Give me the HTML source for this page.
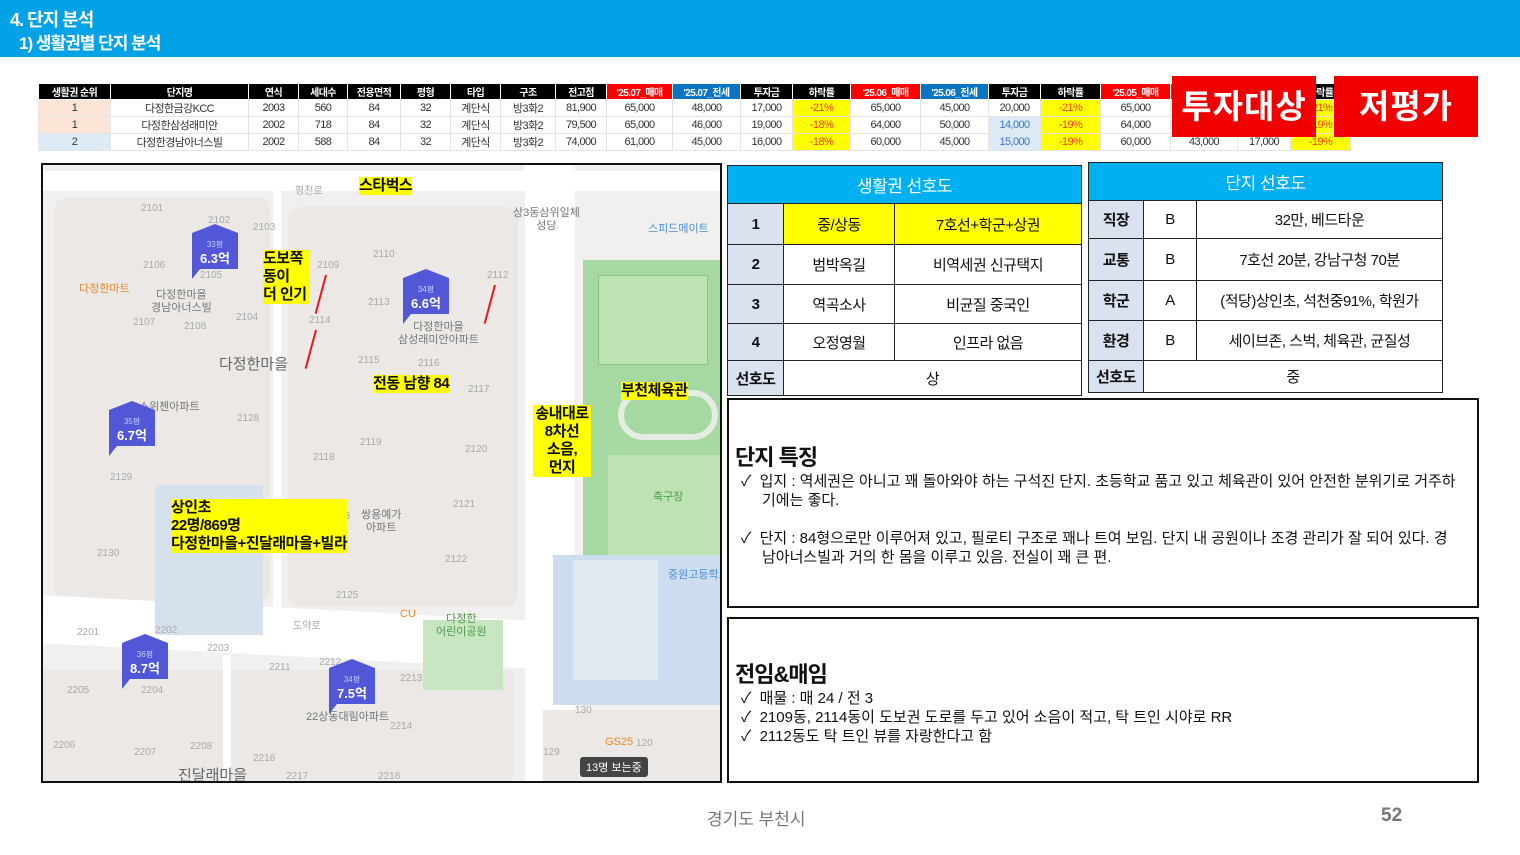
<!DOCTYPE html>
<html><head><meta charset="utf-8"><style>
*{margin:0;padding:0;box-sizing:border-box}
body{width:1520px;height:855px;background:#fff;position:relative;overflow:hidden;font-family:"Liberation Sans","Noto Sans CJK KR",sans-serif;color:#111}
.a{position:absolute}
#hdr{left:0;top:0;width:1520px;height:57px;background:#03a2e6;color:#fff;font-weight:bold}
table{border-collapse:collapse;table-layout:fixed}
#t1{left:38px;top:83px;width:1312px;font-size:11px;letter-spacing:-0.6px}
#t1 th{background:#000;color:#fff;height:15px;font-weight:bold;border:1px solid #fff;font-size:10px}
#t1 td{height:17px;text-align:center;border:1px solid #e4e4e4;color:#333}
#t1 th.r{background:#ff0000}#t1 th.b{background:#0a74c4}
.y{background:#ffff00;color:#f04020!important}
.lb{background:#dce9f6;color:#3b78c8!important}
.pk{background:#fce4d6}.bl{background:#ddebf7}
.red{background:#f00000;color:#fff;font-weight:bold;font-size:33px;text-align:center;line-height:61px;height:61px;width:144px;top:76px;letter-spacing:1px}
.pt{font-size:15px;text-align:center;letter-spacing:-0.5px}
.pt td{border:1.5px solid #222}
.pt .h{background:#00b0f0;color:#fff;font-size:17px;height:38px}
.pt .g{background:#dbe2ef;font-weight:bold}
.box{border:2px solid #111;left:727px;width:752px}
.box h2{font-size:22px;font-weight:bold;letter-spacing:-1px}
.box p{font-size:15px;letter-spacing:0px;line-height:19px;padding-left:27px;text-indent:-21px;padding-right:4px}
#map{left:41px;top:163px;width:681px;height:620px;border:2px solid #111;background:#f2f0ee;overflow:hidden}
.rd{background:#fff;position:absolute}
.bk{background:#ebe8e5;position:absolute}
.n{position:absolute;font-size:10px;color:#aaa}
.yl{position:absolute;background:#ffff00;color:#111;font-size:15px;font-weight:bold;line-height:18px;letter-spacing:-0.5px}
.mk{position:absolute;width:46px;height:36px;background:#5157d6;color:#fff;text-align:center;font-weight:bold;font-size:13px;line-height:14px;padding-top:5px}
.mk:before{content:"";position:absolute;left:0;top:-9px;border-left:23px solid transparent;border-right:23px solid transparent;border-bottom:9px solid #5157d6}
.mk:after{content:"";position:absolute;left:0;bottom:-10px;border-left:8px solid #5157d6;border-bottom:10px solid transparent}
.mk small{font-size:8px;font-weight:normal;color:#c8cbff;display:block}
.lab{position:absolute;font-size:11px;color:#777;text-align:center;line-height:13px}
.ar{position:absolute;width:2px;background:#e81818;transform-origin:top}
</style></head><body>
<div id="hdr" class="a"><div class="a" style="left:10px;top:6px;font-size:18px;letter-spacing:-1px">4. 단지 분석</div><div class="a" style="left:19px;top:29px;font-size:17px;letter-spacing:-1px">1) 생활권별 단지 분석</div></div>

<table id="t1" class="a">
<colgroup><col style="width:72px"><col style="width:138px"><col style="width:50px"><col style="width:49px"><col style="width:53px"><col style="width:50px"><col style="width:50px"><col style="width:55px"><col style="width:51px"><col style="width:66px"><col style="width:68px"><col style="width:52px"><col style="width:58px"><col style="width:70px"><col style="width:68px"><col style="width:52px"><col style="width:60px"><col style="width:70px"><col style="width:67px"><col style="width:53px"><col style="width:60px"></colgroup>
<tr><th>생활권 순위</th><th>단지명</th><th>연식</th><th>세대수</th><th>전용면적</th><th>평형</th><th>타입</th><th>구조</th><th>전고점</th><th class="r">'25.07_매매</th><th class="b">'25.07_전세</th><th>투자금</th><th>하락률</th><th class="r">'25.06_매매</th><th class="b">'25.06_전세</th><th>투자금</th><th>하락률</th><th class="r">'25.05_매매</th><th class="b">'25.05_전세</th><th>투자금</th><th>하락률</th></tr>
<tr><td class="pk">1</td><td>다정한금강KCC</td><td>2003</td><td>560</td><td>84</td><td>32</td><td>계단식</td><td>방3화2</td><td>81,900</td><td>65,000</td><td>48,000</td><td>17,000</td><td class="y">-21%</td><td>65,000</td><td>45,000</td><td>20,000</td><td class="y">-21%</td><td>65,000</td><td>48,000</td><td>17,000</td><td class="y">-21%</td></tr>
<tr><td class="pk">1</td><td>다정한삼성래미안</td><td>2002</td><td>718</td><td>84</td><td>32</td><td>계단식</td><td>방3화2</td><td>79,500</td><td>65,000</td><td>46,000</td><td>19,000</td><td class="y">-18%</td><td>64,000</td><td>50,000</td><td class="lb">14,000</td><td class="y">-19%</td><td>64,000</td><td>46,000</td><td>18,000</td><td class="y">-19%</td></tr>
<tr><td class="bl">2</td><td>다정한경남아너스빌</td><td>2002</td><td>588</td><td>84</td><td>32</td><td>계단식</td><td>방3화2</td><td>74,000</td><td>61,000</td><td>45,000</td><td>16,000</td><td class="y">-18%</td><td>60,000</td><td>45,000</td><td class="lb">15,000</td><td class="y">-19%</td><td>60,000</td><td>43,000</td><td>17,000</td><td class="y">-19%</td></tr>
</table>
<div class="a red" style="left:1172px">투자대상</div>
<div class="a red" style="left:1334px">저평가</div>

<div id="map" class="a">
<div class="bk" style="left:12px;top:32px;width:215px;height:405px;border-radius:12px"></div>
<div class="bk" style="left:245px;top:42px;width:230px;height:400px;border-radius:12px"></div>
<div class="bk" style="left:0;top:505px;width:470px;height:115px"></div>
<div class="rd" style="left:0;top:6px;width:681px;height:20px"></div>
<div class="rd" style="left:482px;top:0;width:50px;height:620px"></div>
<div class="rd" style="left:0;top:448px;width:681px;height:48px;transform:rotate(3deg)"></div>
<div class="rd" style="left:230px;top:26px;width:8px;height:420px"></div>
<div class="rd" style="left:180px;top:490px;width:8px;height:130px"></div>
<div class="a" style="left:540px;top:95px;width:141px;height:300px;background:#a6d8a1"></div>
<div class="a" style="left:555px;top:110px;width:110px;height:90px;background:#bde3b4;border:1px solid #8cc284"></div>
<div class="a" style="left:575px;top:225px;width:100px;height:50px;border:6px solid #e4ede1;border-radius:25px"></div>
<div class="a" style="left:565px;top:290px;width:115px;height:110px;background:#bde3b4"></div>
<div class="a" style="left:510px;top:390px;width:171px;height:150px;background:#cddcee"></div>
<div class="a" style="left:530px;top:395px;width:85px;height:120px;background:#e0e8f0"></div>
<div class="a" style="left:112px;top:320px;width:108px;height:150px;background:#d6e1ee"></div>
<div class="a" style="left:380px;top:455px;width:80px;height:70px;background:#c8e6c2"></div>
<div class="a" style="left:500px;top:545px;width:181px;height:75px;background:#ebe8e5"></div>

<div class="n" style="left:98px;top:38px">2101</div><div class="n" style="left:165px;top:50px">2102</div><div class="n" style="left:210px;top:57px">2103</div><div class="n" style="left:100px;top:95px">2106</div><div class="n" style="left:157px;top:105px">2105</div><div class="n" style="left:90px;top:152px">2107</div><div class="n" style="left:141px;top:156px">2108</div><div class="n" style="left:193px;top:147px">2104</div><div class="n" style="left:274px;top:95px">2109</div><div class="n" style="left:330px;top:84px">2110</div><div class="n" style="left:444px;top:105px">2112</div><div class="n" style="left:325px;top:132px">2113</div><div class="n" style="left:266px;top:150px">2114</div><div class="n" style="left:315px;top:190px">2115</div><div class="n" style="left:375px;top:193px">2116</div><div class="n" style="left:425px;top:219px">2117</div><div class="n" style="left:194px;top:248px">2128</div><div class="n" style="left:317px;top:272px">2119</div><div class="n" style="left:422px;top:279px">2120</div><div class="n" style="left:270px;top:287px">2118</div><div class="n" style="left:67px;top:307px">2129</div><div class="n" style="left:410px;top:334px">2121</div><div class="n" style="left:285px;top:346px">2123</div><div class="n" style="left:54px;top:383px">2130</div><div class="n" style="left:402px;top:389px">2122</div><div class="n" style="left:293px;top:425px">2125</div><div class="n" style="left:250px;top:452px">도약로</div><div class="n" style="left:34px;top:462px">2201</div><div class="n" style="left:112px;top:460px">2202</div><div class="n" style="left:164px;top:478px">2203</div><div class="n" style="left:226px;top:497px">2211</div><div class="n" style="left:276px;top:492px">2212</div><div class="n" style="left:357px;top:508px">2213</div><div class="n" style="left:24px;top:520px">2205</div><div class="n" style="left:98px;top:520px">2204</div><div class="n" style="left:347px;top:556px">2214</div><div class="n" style="left:10px;top:575px">2206</div><div class="n" style="left:91px;top:582px">2207</div><div class="n" style="left:147px;top:576px">2208</div><div class="n" style="left:210px;top:588px">2216</div><div class="n" style="left:243px;top:606px">2217</div><div class="n" style="left:335px;top:606px">2218</div><div class="n" style="left:252px;top:17px">평천로</div><div class="n" style="left:532px;top:540px">130</div><div class="n" style="left:500px;top:582px">129</div><div class="n" style="left:593px;top:573px">120</div>

<div class="lab" style="left:36px;top:118px;color:#e88a2a">다정한마트</div>
<div class="lab" style="left:108px;top:124px">다정한마을<br>경남아너스빌</div>
<div class="lab" style="left:176px;top:193px;font-size:15px;color:#666">다정한마을</div>
<div class="lab" style="left:355px;top:156px">다정한마을<br>삼성래미안아파트</div>
<div class="lab" style="left:470px;top:42px">상3동삼위일체<br>성당</div>
<div class="lab" style="left:605px;top:58px;color:#4a8fd6">스피드메이트</div>
<div class="lab" style="left:88px;top:236px">C스위첸아파트</div>
<div class="lab" style="left:318px;top:344px">쌍용예가<br>아파트</div>
<div class="lab" style="left:610px;top:326px;color:#4a9a4a">축구장</div>
<div class="lab" style="left:625px;top:404px;color:#4a8fd6;white-space:nowrap">중원고등학교</div>
<div class="lab" style="left:393px;top:448px;color:#4a9a4a">다정한<br>어린이공원</div>
<div class="lab" style="left:357px;top:443px;color:#e88a2a">CU</div>
<div class="lab" style="left:562px;top:571px;color:#e88a2a">GS25</div>
<div class="lab" style="left:135px;top:604px;font-size:15px;color:#666">진달래마을</div>
<div class="lab" style="left:263px;top:546px">22상동대림아파트</div>

<div class="yl" style="left:316px;top:12px">스타벅스</div>
<div class="yl" style="left:220px;top:85px;width:47px">도보쪽<br>동이<br>더 인기</div>
<div class="yl" style="left:330px;top:210px">전동 남향 84</div>
<div class="yl" style="left:490px;top:240px;width:58px;text-align:center">송내대로<br>8차선<br>소음,<br>먼지</div>
<div class="yl" style="left:578px;top:217px">부천체육관</div>
<div class="yl" style="left:128px;top:334px">상인초<br>22명/869명<br>다정한마을+진달래마을+빌라</div>

<div class="ar" style="left:282px;top:110px;height:40px;transform:rotate(15deg)"></div>
<div class="ar" style="left:272px;top:165px;height:40px;transform:rotate(15deg)"></div>
<div class="ar" style="left:451px;top:120px;height:40px;transform:rotate(15deg)"></div>

<div class="mk" style="left:149px;top:68px"><small>33평</small>6.3억</div>
<div class="mk" style="left:360px;top:113px"><small>34평</small>6.6억</div>
<div class="mk" style="left:66px;top:245px"><small>35평</small>6.7억</div>
<div class="mk" style="left:79px;top:478px"><small>36평</small>8.7억</div>
<div class="mk" style="left:286px;top:503px"><small>34평</small>7.5억</div>
<div class="a" style="left:537px;top:592px;background:#444;color:#fff;font-size:11px;padding:2px 6px;border-radius:3px">13명 보는중</div>
</div>

<table class="a pt" style="left:727px;top:165px;width:355px">
<colgroup><col style="width:56px"><col style="width:111px"><col></colgroup>
<tr><td colspan="3" class="h">생활권 선호도</td></tr>
<tr style="height:41px"><td class="g">1</td><td style="background:#ffff00">중/상동</td><td style="background:#ffff00">7호선+학군+상권</td></tr>
<tr style="height:40px"><td class="g">2</td><td>범박옥길</td><td>비역세권 신규택지</td></tr>
<tr style="height:39px"><td class="g">3</td><td>역곡소사</td><td>비균질 중국인</td></tr>
<tr style="height:37px"><td class="g">4</td><td>오정영월</td><td>인프라 없음</td></tr>
<tr style="height:35px"><td class="g">선호도</td><td colspan="2">상</td></tr>
</table>
<table class="a pt" style="left:1088px;top:162px;width:355px">
<colgroup><col style="width:55px"><col style="width:53px"><col></colgroup>
<tr><td colspan="3" class="h">단지 선호도</td></tr>
<tr style="height:38px"><td class="g">직장</td><td>B</td><td>32만, 베드타운</td></tr>
<tr style="height:42px"><td class="g">교통</td><td>B</td><td>7호선 20분, 강남구청 70분</td></tr>
<tr style="height:40px"><td class="g">학군</td><td>A</td><td>(적당)상인초, 석천중91%, 학원가</td></tr>
<tr style="height:40px"><td class="g">환경</td><td>B</td><td>세이브존, 스벅, 체육관, 균질성</td></tr>
<tr style="height:32px"><td class="g">선호도</td><td colspan="2">중</td></tr>
</table>

<div class="a box" style="top:398px;height:210px;padding:40px 0 0 6px">
<h2>단지 특징</h2>
<p>✓&nbsp; 입지 : 역세권은 아니고 꽤 돌아와야 하는 구석진 단지. 초등학교 품고 있고 체육관이 있어 안전한 분위기로 거주하<br>기에는 좋다.</p>
<p style="margin-top:19px">✓&nbsp; 단지 : 84형으로만 이루어져 있고, 필로티 구조로 꽤나 트여 보임. 단지 내 공원이나 조경 관리가 잘 되어 있다. 경<br>남아너스빌과 거의 한 몸을 이루고 있음. 전실이 꽤 큰 편.</p>
</div>
<div class="a box" style="top:617px;height:166px;padding:38px 0 0 6px">
<h2>전임&amp;매임</h2>
<p>✓&nbsp; 매물 : 매 24 / 전 3</p>
<p>✓&nbsp; 2109동, 2114동이 도보권 도로를 두고 있어 소음이 적고, 탁 트인 시야로 RR</p>
<p>✓&nbsp; 2112동도 탁 트인 뷰를 자랑한다고 함</p>
</div>

<div class="a" style="left:707px;top:805px;font-size:17px;color:#777">경기도 부천시</div>
<div class="a" style="left:1381px;top:805px;font-size:19px;color:#777;font-weight:bold">52</div>
</body></html>
